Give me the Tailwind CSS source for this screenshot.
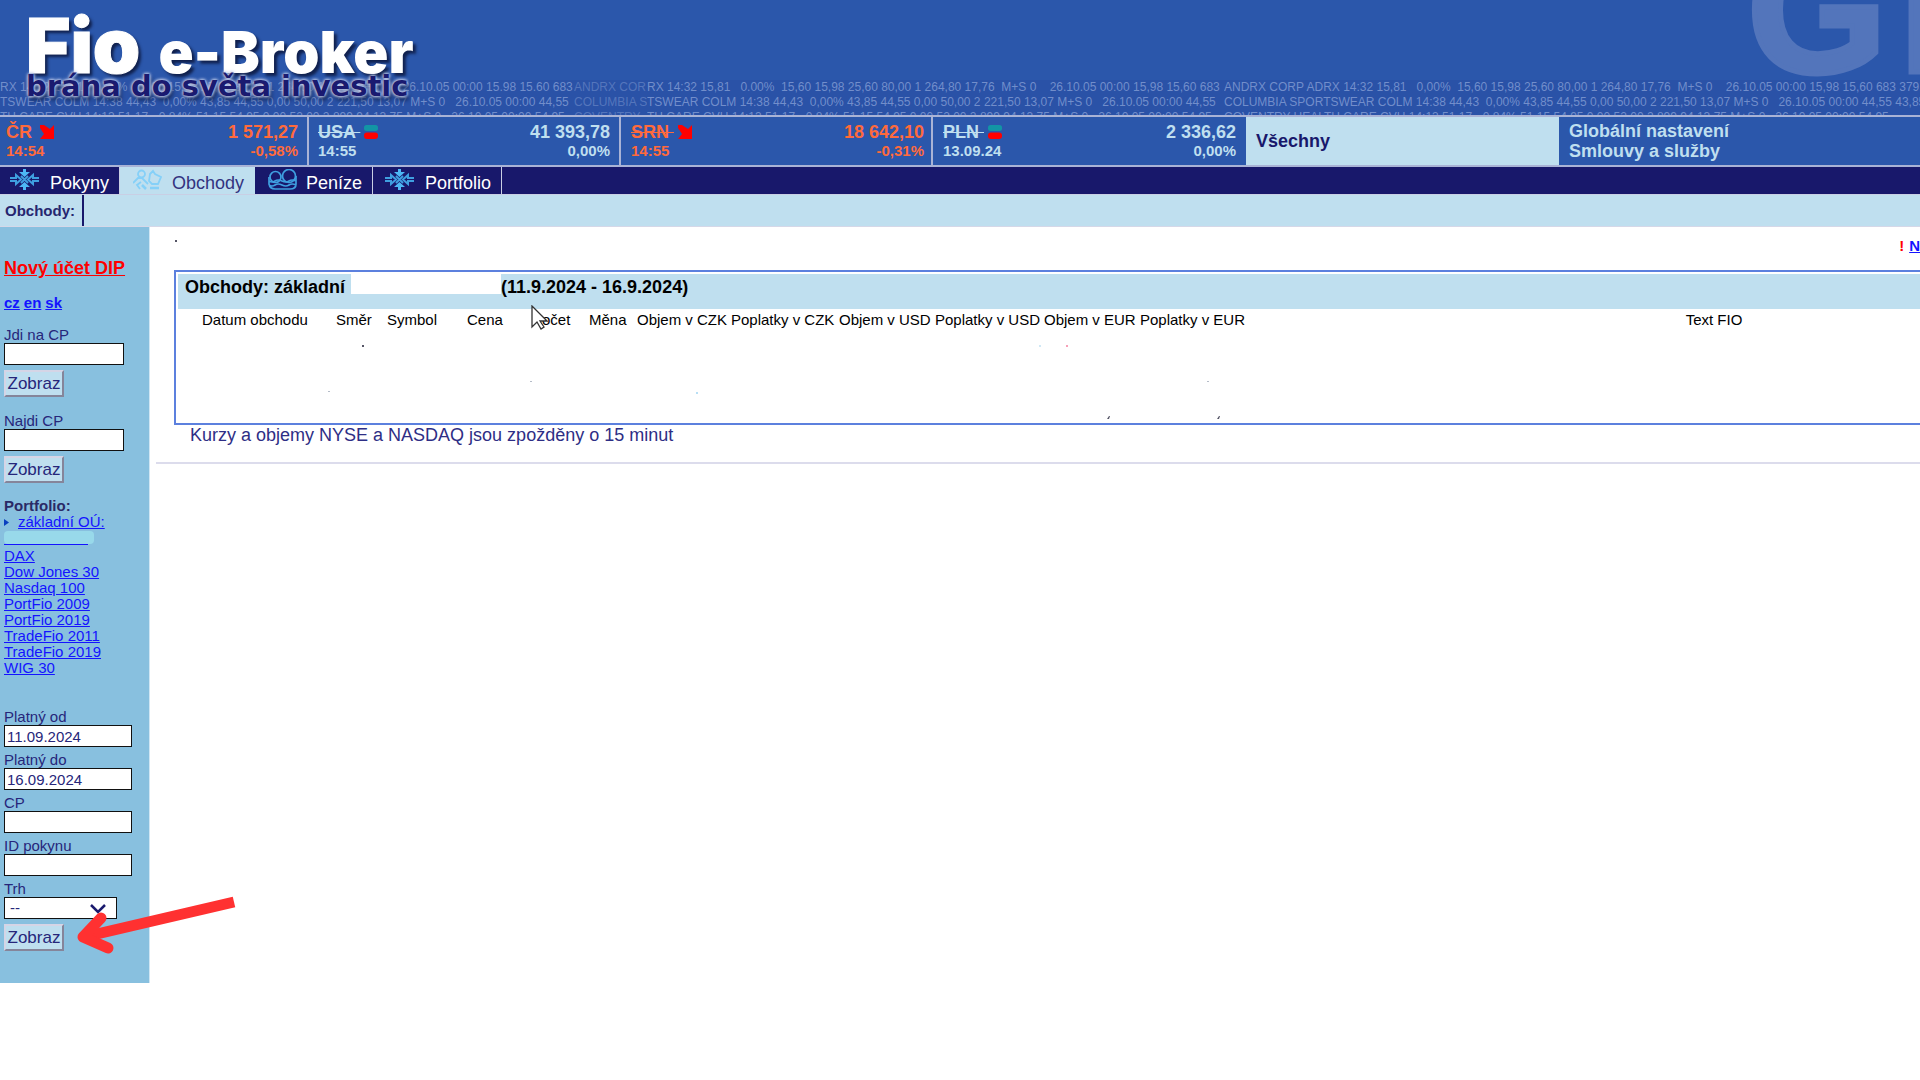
<!DOCTYPE html>
<html lang="cs">
<head>
<meta charset="utf-8">
<title>Fio e-Broker</title>
<script src="https://cdn.jsdelivr.net/npm/@tailwindcss/browser@4"></script>
</head>
<body class="bg-white overflow-x-hidden font-['Liberation_Sans',Arial,sans-serif] text-[#26267a]">

<header class="relative h-[117px] overflow-hidden border-b-2 border-[#a9b3d6] bg-[#2b57ab]">
  <div class="absolute right-[-89px] top-[-70px] flex gap-[12px] text-[180px] leading-[160px] font-bold text-[#5375bb] [-webkit-text-stroke:5px_#5375bb]" aria-hidden="true"><span>G</span><span>L</span></div>
  <div class="absolute inset-x-0 top-[80px] text-xs leading-[15px] text-[#8ba3d8]/75" aria-hidden="true">
    <div class="absolute inset-0 h-[36px] bg-[#2a4ea3]/50"></div>
    <div class="relative flex">
      <span class="w-[574px] shrink-0 overflow-hidden whitespace-pre">RX 14:32 15,81   0.00%  15,60 15,98 25,60 80,00 1 264,80 17,76  M+S 0    26.10.05 00:00 15.98 15.60 683</span>
      <span class="w-[73px] shrink-0 overflow-hidden whitespace-pre opacity-60">ANDRX COR</span>
      <span class="w-[577px] shrink-0 overflow-hidden whitespace-pre">RX 14:32 15,81   0.00%  15,60 15,98 25,60 80,00 1 264,80 17,76  M+S 0    26.10.05 00:00 15,98 15,60 683</span>
      <span class="grow basis-0 overflow-hidden whitespace-pre">ANDRX CORP ADRX 14:32 15,81   0,00%  15,60 15,98 25,60 80,00 1 264,80 17,76  M+S 0    26.10.05 00:00 15,98 15,60 683 379</span>
    </div>
    <div class="relative flex">
      <span class="w-[574px] shrink-0 overflow-hidden whitespace-pre">TSWEAR COLM 14:38 44,43  0,00% 43,85 44,55 0,00 50,00 2 221,50 13,07 M+S 0   26.10.05 00:00 44,55</span>
      <span class="w-[73px] shrink-0 overflow-hidden whitespace-pre opacity-60">COLUMBIA S</span>
      <span class="w-[577px] shrink-0 overflow-hidden whitespace-pre">TSWEAR COLM 14:38 44,43  0,00% 43,85 44,55 0,00 50,00 2 221,50 13,07 M+S 0   26.10.05 00:00 44,55</span>
      <span class="grow basis-0 overflow-hidden whitespace-pre">COLUMBIA SPORTSWEAR COLM 14:38 44,43  0,00% 43,85 44,55 0,00 50,00 2 221,50 13,07 M+S 0   26.10.05 00:00 44,55 43,85</span>
    </div>
    <div class="relative flex">
      <span class="w-[574px] shrink-0 overflow-hidden whitespace-pre">TH CARE CVH 14:13 51,17  -0,84% 51,15 54,95 0,00 52,00 2 899,94 13,75 M+S 0   26.10.05 00:00 54,95</span>
      <span class="w-[73px] shrink-0 overflow-hidden whitespace-pre opacity-60">COVENTRY</span>
      <span class="w-[577px] shrink-0 overflow-hidden whitespace-pre">TH CARE CVH 14:13 51,17  -0,84% 51,15 54,95 0,00 52,00 2 899,94 13,75 M+S 0   26.10.05 00:00 54,95</span>
      <span class="grow basis-0 overflow-hidden whitespace-pre">COVENTRY HEALTH CARE CVH 14:13 51,17  -0,84% 51,15 54,95 0,00 52,00 2 899,94 13,75 M+S 0   26.10.05 00:00 54,95</span>
    </div>
  </div>
  <div class="relative pl-[26px] pt-[12px]">
    <h1 class="flex h-[62px] items-baseline gap-[18px] font-['Inter',sans-serif] font-black text-white [text-shadow:3px_3px_3px_#10204d]">
      <span class="text-[76px] leading-[66px] [-webkit-text-stroke:1px_white]">Fio</span>
      <span class="text-[58px] leading-[66px]">e-Broker</span>
    </h1>
    <p class="font-['DejaVu_Sans',sans-serif] text-[29px] leading-[24px] font-bold text-[#1a1a70] [text-shadow:0_0_3px_#c8d2ee,0_0_3px_#c8d2ee,0_0_4px_#9fb0dd,2px_4px_4px_#10204d]">brána do světa investic</p>
  </div>
</header>

<section class="grid h-[50px] grid-cols-[309fr_312fr_312fr_313fr_313fr_361fr] border-b-2 border-[#a9b3d6] bg-[#2b57ab] text-lg font-bold leading-[20px] text-[#bfdfef]">
  <div class="flex justify-between border-r-2 border-[#a9b3d6] pl-[6px] pr-[9px] pt-[5px] text-[#ff6a3c]">
    <div><div class="flex items-center gap-[8px]">ČR<svg class="size-[14px]" viewBox="0 0 14 14"><path fill="#f00" d="M0 0h4l6 4 4-4v14H0l4-5-4-6z"/></svg></div><div class="text-[15px] leading-[18px]">14:54</div></div>
    <div class="text-right"><div>1 571,27</div><div class="text-[15px] leading-[18px]">-0,58%</div></div>
  </div>
  <div class="flex justify-between border-r-2 border-[#a9b3d6] pl-[9px] pr-[9px] pt-[5px]">
    <div><div class="flex items-center gap-[4px]"><s class="whitespace-pre">USA </s><svg class="size-[14px]" viewBox="0 0 14 14"><rect width="14" height="6" rx="2.500" fill="#1295a5"/><rect y="7.500" width="14" height="6.500" rx="3" fill="#f00"/></svg></div><div class="text-[15px] leading-[18px]">14:55</div></div>
    <div class="text-right"><div>41 393,78</div><div class="text-[15px] leading-[18px]">0,00%</div></div>
  </div>
  <div class="flex justify-between border-r-2 border-[#a9b3d6] pl-[10px] pr-[7px] pt-[5px] text-[#ff6a3c]">
    <div><div class="flex items-center gap-[4px]"><s class="whitespace-pre">SRN </s><svg class="size-[14px]" viewBox="0 0 14 14"><path fill="#f00" d="M0 0h4l6 4 4-4v14H0l4-5-4-6z"/></svg></div><div class="text-[15px] leading-[18px]">14:55</div></div>
    <div class="text-right"><div>18 642,10</div><div class="text-[15px] leading-[18px]">-0,31%</div></div>
  </div>
  <div class="flex justify-between pl-[10px] pr-[10px] pt-[5px]">
    <div><div class="flex items-center gap-[4px]"><s class="whitespace-pre">PLN </s><svg class="size-[14px]" viewBox="0 0 14 14"><rect width="14" height="6" rx="2.500" fill="#1295a5"/><rect y="7.500" width="14" height="6.500" rx="3" fill="#f00"/></svg></div><div class="text-[15px] leading-[18px]">13.09.24</div></div>
    <div class="text-right"><div>2 336,62</div><div class="text-[15px] leading-[18px]">0,00%</div></div>
  </div>
  <div class="flex items-center bg-[#bfdfef] pl-[10px] text-[#18186b]">Všechny</div>
  <div class="flex flex-col justify-center pl-[10px]"><a href="#">Globální nastavení</a><a href="#">Smlouvy a služby</a></div>
</section>

<nav class="flex h-[28px] border-b border-[#c9cfe4] bg-[#18186b] text-lg leading-[27px] text-white">
  <a href="#" class="flex w-[120px] border-r border-[#c9cfe4] pl-[10px] gap-[11px]">
    <svg class="mt-[2px] h-[21px] w-[29px]" viewBox="0 0 29 21" fill="#4db8f5"><path d="M13 0h3v3h4l-5.500 5L9 3h4zM13 21h3v-3h4l-5.500-5L9 18h4z"/><path fill="none" stroke="#3f9fe0" stroke-width="2" d="M0 9h6V6l5 4.500L6 15v-3H0M29 9h-6V6l-5 4.500 5 4.500v-3h6M11 7l7 7M18 7l-7 7"/></svg>
    <span class="pt-[3px]">Pokyny</span></a>
  <a href="#" class="flex w-[135px] bg-[#bfdfef] pl-[13px] gap-[10px] text-[#33337f]">
    <svg class="mt-[2px] h-[21px] w-[29px]" viewBox="0 0 29 21" fill="none" stroke="#85d0f8" stroke-width="1.800"><circle cx="8.500" cy="5" r="3.500"/><path d="M0 14l5-5h4l6 6M8 13l-4 3 3 4M17 5l3-3 2 3 6 3-3 7h-6l-3-3z"/><path d="M9 16l4 4M17 19h9" stroke-width="2.500"/></svg>
    <span class="pt-[3px]">Obchody</span></a>
  <a href="#" class="flex w-[118px] border-r border-[#c9cfe4] pl-[13px] gap-[9px]">
    <svg class="mt-[2px] h-[21px] w-[29px]" viewBox="0 0 29 21" fill="none" stroke="#3f9fe0" stroke-width="1.700"><circle cx="7.500" cy="8" r="5.500"/><circle cx="21" cy="7" r="6.500"/><path d="M1 8v7q1 5 6 5h15q6 0 6-5V7M1 12q3 2 6 0t7 0 7 0 7 0M1 16q3 2 6 0t7 0 7 0 7 0"/></svg>
    <span class="pt-[3px]">Peníze</span></a>
  <a href="#" class="flex w-[129px] border-r border-[#c9cfe4] pl-[12px] gap-[11px]">
    <svg class="mt-[2px] h-[21px] w-[29px]" viewBox="0 0 29 21" fill="#4db8f5"><path d="M13 0h3v3h4l-5.500 5L9 3h4zM13 21h3v-3h4l-5.500-5L9 18h4z"/><path fill="none" stroke="#3f9fe0" stroke-width="2" d="M0 9h6V6l5 4.500L6 15v-3H0M29 9h-6V6l-5 4.500 5 4.500v-3h6M11 7l7 7M18 7l-7 7"/></svg>
    <span class="pt-[3px]">Portfolio</span></a>
</nav>

<div class="flex h-[32px] border-b border-[#d5d8e8] bg-[#bfdfef] text-[15px] leading-[31px] font-bold text-[#26266f]">
  <div class="w-[84px] border-r-2 border-[#18186b] pl-[5px]">Obchody:</div>
</div>

<div class="flex items-start">
  <aside class="relative w-[150px] shrink-0 border-r border-[#cfe6f4] bg-[#88c0df] pb-[32px] pl-[4px] pt-[31px] text-[15px] leading-[16px]">
    <a href="#" class="block text-lg leading-[20px] font-bold text-[#f00] underline">Nový účet DIP</a>
    <div class="mt-[17px] flex gap-[4px] font-bold text-[#1414ff]"><a href="#" class="underline">cz</a><a href="#" class="underline">en</a><a href="#" class="underline">sk</a></div>
    <form class="mt-[16px]">
      <label for="jdi" class="block">Jdi na CP</label>
      <input id="jdi" type="text" class="block h-[22px] w-[120px] border border-[#111] bg-white">
      <button type="button" class="mt-[5px] block h-[27px] w-[60px] border-2 border-t-[#d5d5e6] border-l-[#d5d5e6] border-b-[#85859a] border-r-[#85859a] bg-[#bfdfef] text-[17px]">Zobraz</button>
    </form>
    <form class="mt-[16px]">
      <label for="najdi" class="block">Najdi CP</label>
      <input id="najdi" type="text" class="block h-[22px] w-[120px] border border-[#111] bg-white">
      <button type="button" class="mt-[5px] block h-[27px] w-[60px] border-2 border-t-[#d5d5e6] border-l-[#d5d5e6] border-b-[#85859a] border-r-[#85859a] bg-[#bfdfef] text-[17px]">Zobraz</button>
    </form>
    <h2 class="mt-[15px] font-bold text-[#2a2a66]">Portfolio:</h2>
    <ul class="flex flex-col text-[#1414ff]">
      <li class="flex items-center gap-[9px]"><svg class="h-[7px] w-[5px]" viewBox="0 0 5 7"><path fill="#0a3fc0" d="M0 0l5 3.500L0 7z"/></svg><a href="#" class="underline">základní OÚ:</a></li>
      <li class="h-[18px] pt-px"><div class="h-[13px] w-[90px] rounded-[4px] bg-[#98d9ea]"></div><div class="h-px w-[84px] bg-[#1414ff]"></div></li>
      <li><a href="#" class="underline">DAX</a></li>
      <li><a href="#" class="underline">Dow Jones 30</a></li>
      <li><a href="#" class="underline">Nasdaq 100</a></li>
      <li><a href="#" class="underline">PortFio 2009</a></li>
      <li><a href="#" class="underline">PortFio 2019</a></li>
      <li><a href="#" class="underline">TradeFio 2011</a></li>
      <li><a href="#" class="underline">TradeFio 2019</a></li>
      <li><a href="#" class="underline">WIG 30</a></li>
    </ul>
    <form class="mt-[33px] flex flex-col items-start gap-[5px]">
      <div><label for="od" class="block">Platný od</label><input id="od" type="text" value="11.09.2024" class="block h-[22px] w-[128px] border border-[#111] bg-white pl-[2px]"></div>
      <div><label for="do" class="block">Platný do</label><input id="do" type="text" value="16.09.2024" class="block h-[22px] w-[128px] border border-[#111] bg-white pl-[2px]"></div>
      <div><label for="cp" class="block">CP</label><input id="cp" type="text" class="block h-[22px] w-[128px] border border-[#111] bg-white pl-[2px]"></div>
      <div><label for="pokyn" class="block">ID pokynu</label><input id="pokyn" type="text" class="block h-[22px] w-[128px] border border-[#111] bg-white pl-[2px]"></div>
      <div class="relative"><label for="trh" class="block">Trh</label><select id="trh" class="block h-[22px] w-[113px] appearance-none border border-[#111] bg-white pl-[5px]"><option>--</option></select>
        <svg class="pointer-events-none absolute bottom-[4px] right-[11px] h-[11px] w-[16px]" viewBox="0 0 16 11"><path fill="none" stroke="#1a1a6e" stroke-width="2.500" d="M1 1l7 7 7-7"/></svg></div>
      <button type="button" class="h-[27px] w-[60px] border-2 border-t-[#d5d5e6] border-l-[#d5d5e6] border-b-[#85859a] border-r-[#85859a] bg-[#bfdfef] text-[17px]">Zobraz</button>
    </form>
    <svg class="pointer-events-none absolute bottom-[25px] left-[74px] h-[64px] w-[166px]" viewBox="0 0 166 64" fill="none" stroke="#ff3131" stroke-width="11"><path d="M160 8L10 43"/><path d="M27 24L9 43l25 11" stroke-linecap="round" stroke-linejoin="round"/></svg>
  </aside>

  <main class="relative min-w-0 grow pl-[6px] pt-[9px]">
    <p class="flex h-[34px] justify-end gap-[5px] text-[15px] leading-[19px] font-bold"><span class="text-[#f00]">!</span><a href="#" class="text-[#1414ff] underline">N</a></p>
    <section class="relative ml-[18px] h-[155px] border-2 border-r-0 border-[#5c80de] pl-[2px] pt-[2px] text-black">
      <h2 class="flex h-[35px] items-start bg-[#bfdfef] pl-[7px] text-lg leading-[27px] font-bold"><span class="w-[166px]">Obchody: základní</span><span class="h-[20px] w-[150px] bg-white"></span><span>(11.9.2024 - 16.9.2024)</span></h2>
      <table class="w-full table-fixed whitespace-nowrap text-left text-[15px] leading-[22px]">
        <colgroup><col class="w-[158px]"><col class="w-[51px]"><col class="w-[80px]"><col class="w-[65px]"><col class="w-[57px]"><col class="w-[48px]"><col class="w-[94px]"><col class="w-[108px]"><col class="w-[96px]"><col class="w-[109px]"><col class="w-[96px]"><col class="w-[109px]"><col></colgroup>
        <thead><tr><th class="pl-[24px] font-normal">Datum obchodu</th><th class="font-normal">Směr</th><th class="font-normal">Symbol</th><th class="font-normal">Cena</th><th class="font-normal">Počet</th><th class="font-normal">Měna</th><th class="font-normal">Objem v CZK</th><th class="font-normal">Poplatky v CZK</th><th class="font-normal">Objem v USD</th><th class="font-normal">Poplatky v USD</th><th class="font-normal">Objem v EUR</th><th class="font-normal">Poplatky v EUR</th><th class="pl-[259px] text-center font-normal">Text FIO</th></tr></thead>
      </table>
      <svg class="pointer-events-none absolute left-[355px] top-[33px] h-[25px] w-[17px]" viewBox="0 0 17 25"><path fill="#fff" stroke="#333" stroke-width="1.300" d="M1 1v21l5-5 4 7 3-2-4-6h7z"/></svg>
    </section>
    <p class="pl-[34px] text-lg leading-[20px] text-[#2e2e85]">Kurzy a objemy NYSE a NASDAQ jsou zpožděny o 15 minut</p>
    <hr class="mt-[17px] border-t-2 border-[#dcdcec]">
    <svg class="pointer-events-none absolute left-0 top-0 h-[240px] w-[1600px]" viewBox="150 227 1600 240" aria-hidden="true"><g fill="#556"><rect x="175" y="240" width="2" height="2"/><rect x="362" y="345" width="2" height="2"/><path d="M1107 419l2-3h1l-1 3zM1217 419l2-3h1l-1 3z"/></g><g fill="#b5bcc8"><rect x="1207" y="381" width="2" height="1"/><rect x="530" y="381" width="2" height="1"/><rect x="328" y="391" width="2" height="1"/><rect x="696" y="392" width="2" height="2" fill="#b8dff5"/><rect x="1039" y="345" width="2" height="2" fill="#d0e8f5"/><rect x="1066" y="345" width="2" height="2" fill="#f7a0b8"/></g></svg>
  </main>
</div>
</body>
</html>
